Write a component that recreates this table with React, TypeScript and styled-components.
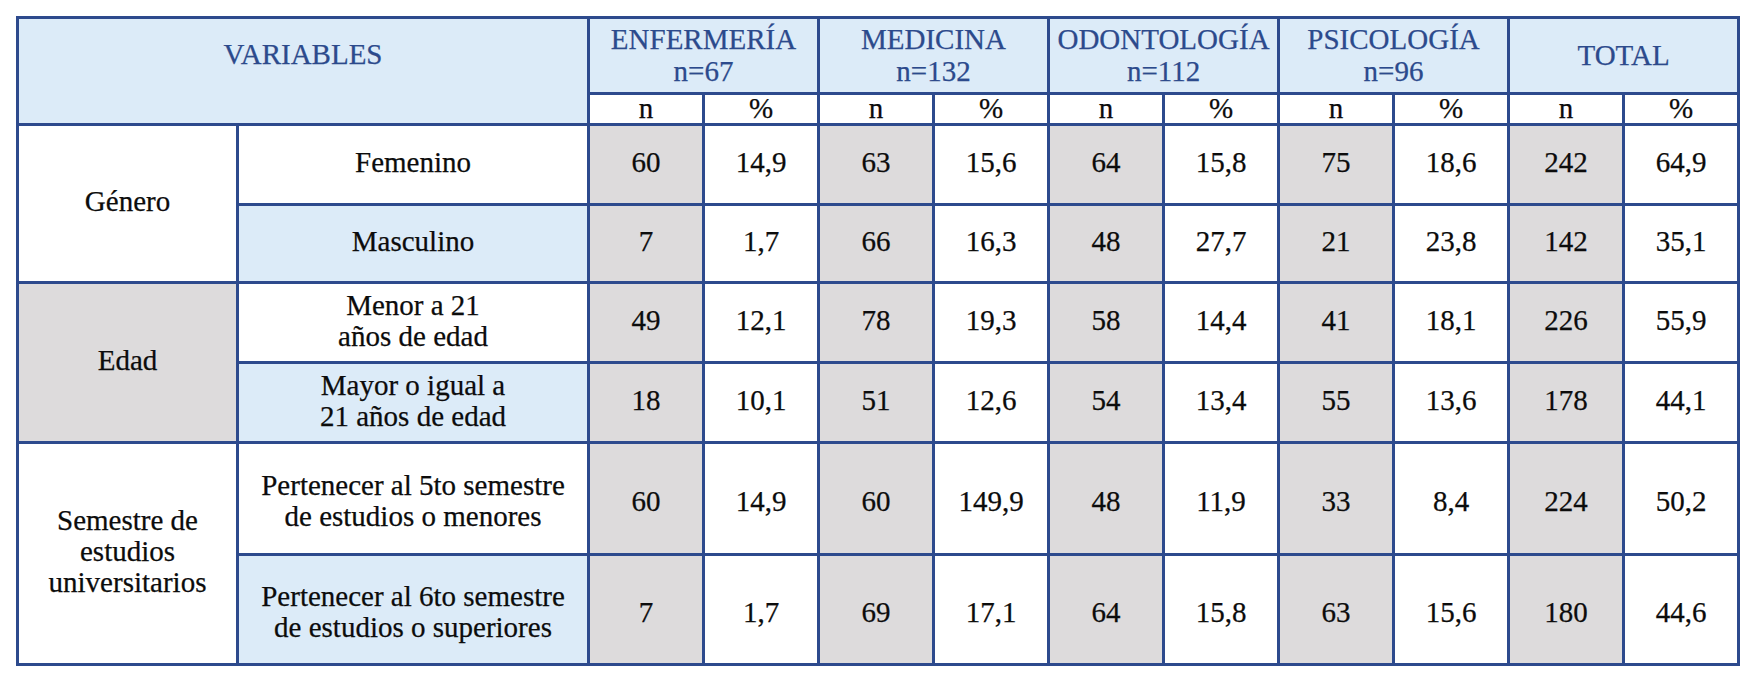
import * as React from 'react';
import styled, { createGlobalStyle } from 'styled-components';

const line = '#2d4a8d';
const headBlue = '#dcebf8';
const grey = '#dddbdc';
const headText = '#2c4a8c';
const serif = `'Liberation Serif', Tinos, 'Times New Roman', serif`;

type Tone = 'white' | 'blue' | 'grey';

const toneColor = (t: Tone) => (t === 'blue' ? headBlue : t === 'grey' ? grey : '#ffffff');

const GlobalStyle = createGlobalStyle`
  body {
    margin: 0;
    background: #ffffff;
    font-family: ${serif};
  }
`;

const Page = styled.div`
  padding: 16px 0 0 16px;
`;

const Table = styled.table`
  border-collapse: collapse;
  table-layout: fixed;
  width: 1721px;
  border: 3px solid ${line};
  font-family: ${serif};
  font-size: 29px;
  line-height: 31px;
  color: #0c0c0c;
  -webkit-text-stroke: 0.25px currentColor;
`;

const Row = styled.tr<{ $h: number }>`
  height: ${(p) => p.$h}px;
`;

const HeadCell = styled.th<{ $pb?: number }>`
  background: ${headBlue};
  color: ${headText};
  font-weight: normal;
  line-height: 32px;
  text-align: center;
  vertical-align: middle;
  border: 3px solid ${line};
  padding: 0 2px ${(p) => p.$pb ?? 2}px;
`;

const SubHead = styled.th`
  background: #ffffff;
  font-weight: normal;
  text-align: center;
  border: 3px solid ${line};
  padding: 0 0 3px;
  line-height: 24px;
`;

// $shift > 0 pushes the text down, < 0 lifts it
const Cell = styled.td<{ $tone: Tone; $shift?: number }>`
  background: ${(p) => toneColor(p.$tone)};
  text-align: center;
  vertical-align: middle;
  border: 3px solid ${line};
  padding: ${(p) => Math.max(p.$shift ?? -4, 0)}px 4px ${(p) => Math.max(-(p.$shift ?? -4), 0)}px;
`;

type Item = {
  label: string[];
  tone: Tone;
  h: number;
  shift?: number;
  values: (number | string)[];
};

type Group = {
  label: string[];
  tone: Tone;
  items: Item[];
};

const careers = [
  { name: 'ENFERMERÍA', n: 67 },
  { name: 'MEDICINA', n: 132 },
  { name: 'ODONTOLOGÍA', n: 112 },
  { name: 'PSICOLOGÍA', n: 96 },
];

const groups: Group[] = [
  {
    label: ['Género'],
    tone: 'white',
    items: [
      { label: ['Femenino'], tone: 'white', h: 80, values: [60, '14,9', 63, '15,6', 64, '15,8', 75, '18,6', 242, '64,9'] },
      { label: ['Masculino'], tone: 'blue', h: 78, values: [7, '1,7', 66, '16,3', 48, '27,7', 21, '23,8', 142, '35,1'] },
    ],
  },
  {
    label: ['Edad'],
    tone: 'grey',
    items: [
      { label: ['Menor a 21', 'años de edad'], tone: 'white', h: 80, values: [49, '12,1', 78, '19,3', 58, '14,4', 41, '18,1', 226, '55,9'] },
      { label: ['Mayor o igual a', '21 años de edad'], tone: 'blue', h: 80, values: [18, '10,1', 51, '12,6', 54, '13,4', 55, '13,6', 178, '44,1'] },
    ],
  },
  {
    label: ['Semestre de', 'estudios', 'universitarios'],
    tone: 'white',
    items: [
      { label: ['Pertenecer al 5to semestre', 'de estudios o menores'], tone: 'white', h: 112, shift: 5, values: [60, '14,9', 60, '149,9', 48, '11,9', 33, '8,4', 224, '50,2'] },
      { label: ['Pertenecer al 6to semestre', 'de estudios o superiores'], tone: 'blue', h: 110, shift: 5, values: [7, '1,7', 69, '17,1', 64, '15,8', 63, '15,6', 180, '44,6'] },
    ],
  },
];

const Lines: React.FC<{ text: string[] }> = ({ text }) => (
  <>
    {text.map((t, i) => (
      <React.Fragment key={i}>
        {i > 0 && <br />}
        {t}
      </React.Fragment>
    ))}
  </>
);

const App: React.FC = () => {
  return (
    <Page>
      <GlobalStyle />
      <Table>
        <colgroup>
          <col style={{ width: 220 }} />
          <col style={{ width: 351 }} />
          {Array.from({ length: 10 }).map((_, i) => (
            <col key={i} style={{ width: 115 }} />
          ))}
        </colgroup>
        <thead>
          <Row $h={76}>
            <HeadCell colSpan={2} rowSpan={2} $pb={34}>
              VARIABLES
            </HeadCell>
            {careers.map((c) => (
              <HeadCell key={c.name} colSpan={2}>
                {c.name}
                <br />
                n={c.n}
              </HeadCell>
            ))}
            <HeadCell colSpan={2}>TOTAL</HeadCell>
          </Row>
          <Row $h={31}>
            {Array.from({ length: 5 }).map((_, i) => (
              <React.Fragment key={i}>
                <SubHead>n</SubHead>
                <SubHead>%</SubHead>
              </React.Fragment>
            ))}
          </Row>
        </thead>
        <tbody>
          {groups.map((g) =>
            g.items.map((it, idx) => (
              <Row key={it.label.join(' ')} $h={it.h}>
                {idx === 0 && (
                  <Cell $tone={g.tone} rowSpan={g.items.length}>
                    <Lines text={g.label} />
                  </Cell>
                )}
                <Cell $tone={it.tone} $shift={it.shift}>
                  <Lines text={it.label} />
                </Cell>
                {it.values.map((v, k) => (
                  <Cell key={k} $tone={k % 2 === 0 ? 'grey' : 'white'} $shift={it.shift}>
                    {v}
                  </Cell>
                ))}
              </Row>
            ))
          )}
        </tbody>
      </Table>
    </Page>
  );
};

export default App;
